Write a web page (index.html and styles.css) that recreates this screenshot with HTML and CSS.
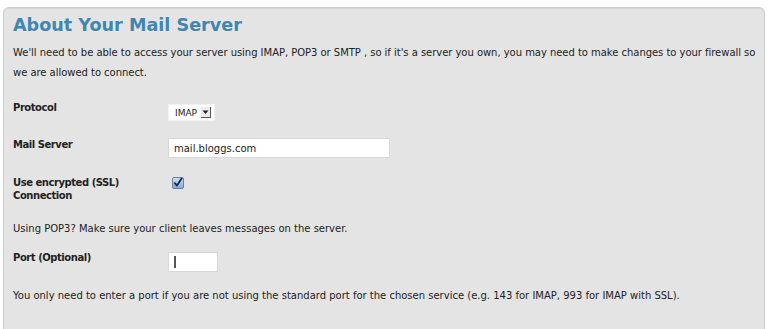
FILE: index.html
```html
<!DOCTYPE html>
<html>
<head>
<meta charset="utf-8">
<link rel="stylesheet" href="styles.css">
</head>
<body>
<div class="panel">
  <h2 class="title">About Your Mail Server</h2>
  <p class="intro">We'll need to be able to access your server using IMAP, POP3 or SMTP , so if it's a server you own, you may need to make changes to your firewall so we are allowed to connect.</p>
  <div class="row row-protocol">
    <label class="label">Protocol</label>
    <div class="field">
      <span class="select"><span class="select-text">IMAP</span><span class="select-arrow"><svg width="7" height="8" viewBox="0 0 7 8"><path d="M0.5 2.5 L6.5 2.5 L3.5 6 Z" fill="#222"/></svg></span></span>
    </div>
  </div>
  <div class="row row-server">
    <label class="label">Mail Server</label>
    <div class="field"><span class="input input-wide">mail.bloggs.com</span></div>
  </div>
  <div class="row row-ssl">
    <label class="label">Use encrypted (SSL)<br>Connection</label>
    <div class="field">
      <span class="checkbox"><svg width="12" height="12" viewBox="0 0 12 12"><defs><linearGradient id="g" x1="0" y1="0" x2="0" y2="1"><stop offset="0" stop-color="#cfe0f5"/><stop offset="1" stop-color="#7fa8dc"/></linearGradient></defs><rect x="0.5" y="0.5" width="11" height="11" rx="1.5" fill="url(#g)" stroke="#6d8098"/><path d="M2.8 6.2 L5 8.6 L9.6 1.6" fill="none" stroke="#1b2a44" stroke-width="1.8" stroke-linecap="round" stroke-linejoin="round"/></svg></span>
    </div>
  </div>
  <p class="note note-pop">Using POP3? Make sure your client leaves messages on the server.</p>
  <div class="row row-port">
    <label class="label">Port (Optional)</label>
    <div class="field"><span class="input input-small"><span class="caret"></span></span></div>
  </div>
  <p class="note note-port">You only need to enter a port if you are not using the standard port for the chosen service (e.g. 143 for IMAP, 993 for IMAP with SSL).</p>
</div>
</body>
</html>
```
FILE: styles.css
```css
html, body {
  margin: 0;
  padding: 0;
  background: #ffffff;
}
body {
  padding: 7px 3px 0 3px;
  height: 329px;
  box-sizing: border-box;
  overflow: hidden;
  font-family: "DejaVu Sans", "Open Sans", sans-serif;
  font-size: 10px;
  color: #222;
}
.panel {
  background: #e4e4e4;
  border: 1px solid #cdcdcd;
  border-bottom: none;
  border-radius: 6px 6px 0 0;
  box-shadow: inset 0 1px 0 #d6d6d6;
  padding: 6px 2px 20px 9px;
  height: 322px;
  box-sizing: border-box;
  overflow: hidden;
}
.title {
  margin: 0;
  font-size: 17.6px;
  font-weight: bold;
  color: #3f86b1;
  line-height: 22px;
}
.intro {
  margin: 7px 0 0 0;
  line-height: 20px;
  letter-spacing: -0.035px;
}
.row {
  display: flex;
  align-items: flex-start;
}
.label {
  width: 155px;
  flex: none;
  font-weight: bold;
  line-height: 13px;
  letter-spacing: -0.45px;
}
.field {
  flex: none;
}
.row-protocol { margin-top: 16px; }
.row-protocol .label { padding-top: 2px; }
.row-protocol .field { padding-top: 5px; }
.row-server { margin-top: 17px; }
.row-server .label { padding-top: 0; }
.row-ssl { margin-top: 18px; }
.row-ssl .label { padding-top: 0; }
.select {
  display: inline-flex;
  align-items: center;
  width: 47px;
  height: 17px;
  background: #fff;
  box-sizing: border-box;
  border: 1px solid #f2f2f2;
  padding-left: 6px;
  font-size: 9px;
}
.select-text { flex: 1; }
.select-arrow {
  display: inline-flex;
  align-items: center;
  justify-content: center;
  width: 9px;
  height: 10px;
  margin-right: 3px;
  background: #ececec;
  border-right: 1px solid #555;
  border-bottom: 1px solid #555;
}
.input {
  display: flex;
  align-items: center;
  background: #fff;
  border: 1px solid #d8d8d8;
  box-sizing: border-box;
  padding-left: 5px;
}
.input-wide {
  width: 222px;
  height: 20px;
  font-size: 10px;
}
.input-small {
  width: 50px;
  height: 20px;
}
.caret {
  display: block;
  width: 2px;
  height: 12px;
  background: #555;
}
.checkbox {
  display: block;
  width: 12px;
  height: 12px;
  margin: 1px 0 0 4px;
}
.checkbox svg { display: block; }
.note { margin: 0; line-height: 13px; }
.note-pop { margin-top: 20px; }
.row-port { margin-top: 14px; }
.row-port .label { padding-top: 1.5px; }
.row-port .field { padding-top: 3px; }
.note-port { margin-top: 17px; }
```
